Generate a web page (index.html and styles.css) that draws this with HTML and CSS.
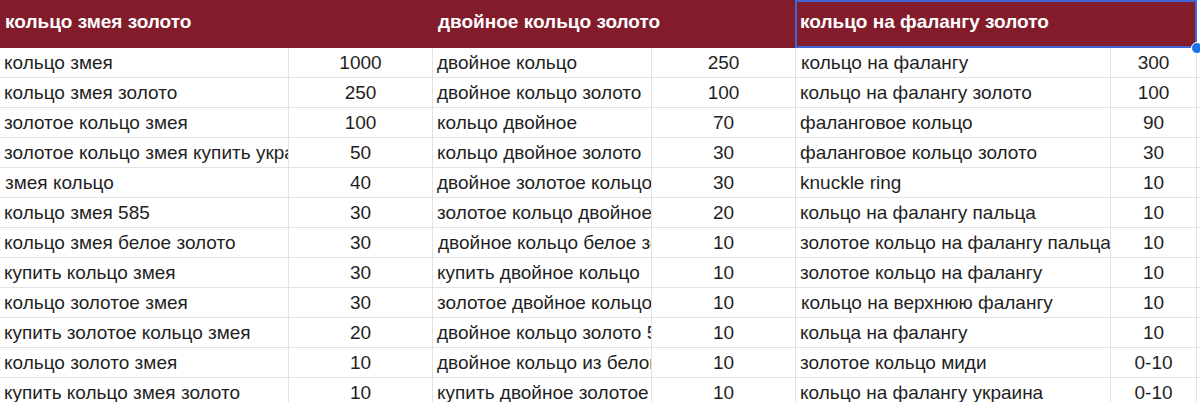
FILE: index.html
```html
<!DOCTYPE html>
<html lang="ru">
<head>
<meta charset="utf-8">
<link rel="stylesheet" href="styles.css">
</head>
<body>
<div class="sheet">
  <div class="hd span2">кольцо змея золото</div>
  <div class="hd span2">двойное кольцо золото</div>
  <div class="hd span2 sel">кольцо на фалангу золото</div>
  <div class="blank hdblank"></div>

  <div class="c t">кольцо змея</div><div class="c n">1000</div>
  <div class="c t">двойное кольцо</div><div class="c n">250</div>
  <div class="c t">кольцо на фалангу</div><div class="c n">300</div><div class="blank"></div>

  <div class="c t">кольцо змея золото</div><div class="c n">250</div>
  <div class="c t">двойное кольцо золото</div><div class="c n">100</div>
  <div class="c t">кольцо на фалангу золото</div><div class="c n">100</div><div class="blank"></div>

  <div class="c t">золотое кольцо змея</div><div class="c n">100</div>
  <div class="c t">кольцо двойное</div><div class="c n">70</div>
  <div class="c t">фаланговое кольцо</div><div class="c n">90</div><div class="blank"></div>

  <div class="c t">золотое кольцо змея купить украина</div><div class="c n">50</div>
  <div class="c t">кольцо двойное золото</div><div class="c n">30</div>
  <div class="c t">фаланговое кольцо золото</div><div class="c n">30</div><div class="blank"></div>

  <div class="c t">змея кольцо</div><div class="c n">40</div>
  <div class="c t">двойное золотое кольцо</div><div class="c n">30</div>
  <div class="c t">knuckle ring</div><div class="c n">10</div><div class="blank"></div>

  <div class="c t">кольцо змея 585</div><div class="c n">30</div>
  <div class="c t">золотое кольцо двойное</div><div class="c n">20</div>
  <div class="c t">кольцо на фалангу пальца</div><div class="c n">10</div><div class="blank"></div>

  <div class="c t">кольцо змея белое золото</div><div class="c n">30</div>
  <div class="c t">двойное кольцо белое золото</div><div class="c n">10</div>
  <div class="c t">золотое кольцо на фалангу пальца</div><div class="c n">10</div><div class="blank"></div>

  <div class="c t">купить кольцо змея</div><div class="c n">30</div>
  <div class="c t">купить двойное кольцо</div><div class="c n">10</div>
  <div class="c t">золотое кольцо на фалангу</div><div class="c n">10</div><div class="blank"></div>

  <div class="c t">кольцо золотое змея</div><div class="c n">30</div>
  <div class="c t">золотое двойное кольцо</div><div class="c n">10</div>
  <div class="c t">кольцо на верхнюю фалангу</div><div class="c n">10</div><div class="blank"></div>

  <div class="c t">купить золотое кольцо змея</div><div class="c n">20</div>
  <div class="c t">двойное кольцо золото 585</div><div class="c n">10</div>
  <div class="c t">кольца на фалангу</div><div class="c n">10</div><div class="blank"></div>

  <div class="c t">кольцо золото змея</div><div class="c n">10</div>
  <div class="c t">двойное кольцо из белого золота</div><div class="c n">10</div>
  <div class="c t">золотое кольцо миди</div><div class="c n">0-10</div><div class="blank"></div>

  <div class="c t">купить кольцо змея золото</div><div class="c n">10</div>
  <div class="c t">купить двойное золотое кольцо</div><div class="c n">10</div>
  <div class="c t">кольцо на фалангу украина</div><div class="c n">0-10</div><div class="blank"></div>
</div>
</body>
</html>
```

FILE: styles.css
```css
html, body {
  margin: 0;
  padding: 0;
  background: #ffffff;
  overflow: hidden;
}

.sheet {
  display: grid;
  grid-template-columns: 289px 144px 219px 144px 315px 86px 1fr;
  grid-template-rows: 48px;
  grid-auto-rows: 30px;
  width: 1200px;
  font-family: "Liberation Sans", Arial, sans-serif;
  font-size: 19px;
  color: #1f1f1f;
}

.hd {
  background: #821c2b;
  color: #ffffff;
  font-weight: bold;
  font-size: 19px;
  display: flex;
  align-items: center;
  padding: 0 5px 4px;
  white-space: nowrap;
  overflow: hidden;
  box-sizing: border-box;
}

.span2 {
  grid-column: span 2;
}

.sel {
  position: relative;
  overflow: visible;
  box-shadow: inset 0 0 0 2px #3e66d8;
  margin-left: -1px;
}

.sel::after {
  content: "";
  position: absolute;
  right: -6px;
  bottom: -6px;
  width: 10px;
  height: 10px;
  border-radius: 50%;
  background: #1a73e8;
  border: 1px solid #ffffff;
  z-index: 2;
}

.c {
  border-right: 1px solid #e2e2e2;
  border-bottom: 1px solid #e2e2e2;
  white-space: nowrap;
  overflow: hidden;
  display: flex;
  align-items: center;
  box-sizing: border-box;
  line-height: 1;
}

.t {
  padding-left: 4px;
  padding-right: 2px;
}

.sheet > .t:nth-child(8n+1) {
  padding-left: 5px;
}

.n {
  justify-content: center;
}

.blank {
  border-bottom: 1px solid #e2e2e2;
}

.hdblank {
  border-bottom: none;
}
```
